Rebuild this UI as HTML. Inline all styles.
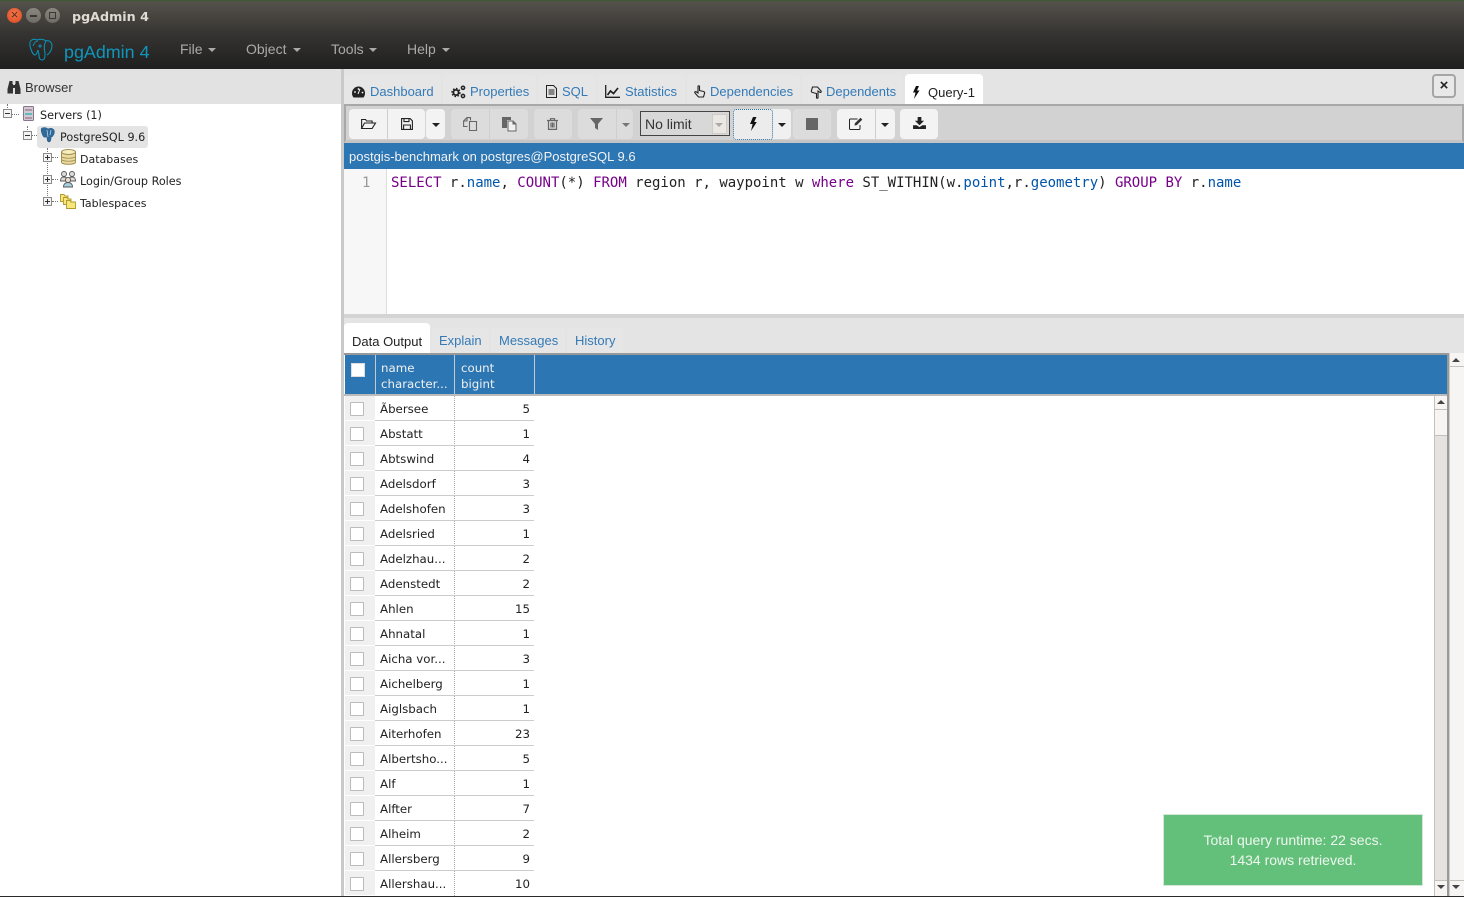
<!DOCTYPE html>
<html><head><meta charset="utf-8"><style>
*{box-sizing:border-box}
html,body{margin:0;padding:0;width:1464px;height:897px;overflow:hidden;background:#fff;font-family:"Liberation Sans",sans-serif}
.a{position:absolute}
svg{position:absolute;overflow:visible}
.t{position:absolute;white-space:nowrap;line-height:16px}
.tree{font:11.2px/14px "DejaVu Sans",sans-serif;color:#222;position:absolute;white-space:nowrap}
.tab{position:absolute;top:75px;height:29px;background:#e6e6e6;border-radius:4px 4px 0 0}
.lnk{position:absolute;top:84px;font-size:13px;line-height:16px;color:#337ab7;white-space:nowrap}
.btn{position:absolute;top:109px;height:30px;background:#f3f3f3;border-radius:4px}
.dis{background:#dcdcdc}
.sep{position:absolute;top:109px;height:30px;width:1px;background:#cfcfcf}
.r{position:absolute;left:345px;width:190px;height:25px;font:11.8px/26px "DejaVu Sans",sans-serif;color:#222}
.r i{position:absolute;left:5px;top:6px;width:14px;height:14px;background:#fff;border:1px solid #bbb;border-radius:1px}
.r b{position:absolute;left:0;top:0;width:30px;height:24px;background:#f0f0f0;font-weight:normal}
.r u{position:absolute;left:35px;top:0;text-decoration:none;white-space:nowrap}
.r s{position:absolute;right:5px;top:0;text-decoration:none}
.r em{position:absolute;left:30px;top:24px;width:159px;height:1px;background:#ccc}
.r q{position:absolute;left:109px;top:0;height:25px;width:0;border-left:1px dotted #aaa;quotes:none}
.r q:before,.r q:after{content:none}
.tg{position:absolute;width:9px;height:9px;border:1px solid #8a8a8a;background:#f4f4f4}
.tg:before{content:"";position:absolute;left:1px;top:3px;width:5px;height:1px;background:#333}
.tg.p:after{content:"";position:absolute;left:3px;top:1px;width:1px;height:5px;background:#333}
.dv{position:absolute;border-left:1px dotted #777}
.dh{position:absolute;border-top:1px dotted #777}
code{font:14px/18px "DejaVu Sans Mono",monospace;white-space:pre;color:#222;letter-spacing:-.012px}
code .k{color:#708}code .v{color:#05a}
</style></head><body>

<!-- window chrome -->
<div class="a" style="left:0;top:0;width:1464px;height:30px;background:linear-gradient(#56524c,#3a3835)"></div>
<div class="a" style="left:0;top:0;width:1464px;height:1px;background:#3c5a35"></div>
<div class="a" style="left:0;top:30px;width:1464px;height:39px;background:linear-gradient(#383634,#1f1f1f)"></div>
<div class="a" style="left:7px;top:8px;width:15px;height:15px;border-radius:50%;background:radial-gradient(circle at 50% 40%,#f47a50,#d9451c)"></div>
<div class="t" style="left:7px;top:7px;width:15px;text-align:center;font-size:13px;color:#5a2a18">×</div>
<div class="a" style="left:26px;top:8px;width:15px;height:15px;border-radius:50%;background:linear-gradient(#8a8780,#6e6b64)"></div>
<div class="a" style="left:30px;top:15px;width:7px;height:2px;background:#3a3835"></div>
<div class="a" style="left:45px;top:8px;width:15px;height:15px;border-radius:50%;background:linear-gradient(#8a8780,#6e6b64)"></div>
<div class="a" style="left:49px;top:12px;width:7px;height:7px;border:1px solid #3a3835"></div>
<div class="t" style="left:72px;top:8px;font:bold 12.7px/16px 'DejaVu Sans',sans-serif;color:#dfdbd2;padding-top:1px">pgAdmin 4</div>
<svg style="left:28px;top:38px" width="26" height="26" viewBox="0 0 26 26" fill="none" stroke="#0a8fb5" stroke-width="1.1"><path d="M9 2C4 0 1 3 2 8c1 4 3 9 5 9 2 0 2-3 3-5M9 2c3-1 7-1 9 1 3-1 6 1 6 5 0 4-3 8-5 9M18 3c-2 3-2 8-1 12 0 4 0 7-3 7-2 0-3-2-3-5 0-2-1-3-1-5"/><circle cx="12" cy="8" r="1" /><path d="M5 8c1-3 3-5 5-5"/></svg>
<div class="t" style="left:64px;top:41px;font-size:17.9px;line-height:22px;color:#0f96bb">pgAdmin 4</div>
<div class="t" style="left:180px;top:41px;font-size:14px;color:#aaa">File</div>
<div class="t" style="left:246px;top:41px;font-size:14px;color:#aaa">Object</div>
<div class="t" style="left:331px;top:41px;font-size:14px;color:#aaa">Tools</div>
<div class="t" style="left:407px;top:41px;font-size:14px;color:#aaa">Help</div>
<div class="a" style="left:208px;top:48px;border:4px solid transparent;border-top-color:#aaa;border-bottom:0"></div>
<div class="a" style="left:293px;top:48px;border:4px solid transparent;border-top-color:#aaa;border-bottom:0"></div>
<div class="a" style="left:369px;top:48px;border:4px solid transparent;border-top-color:#aaa;border-bottom:0"></div>
<div class="a" style="left:442px;top:48px;border:4px solid transparent;border-top-color:#aaa;border-bottom:0"></div>

<!-- left panel -->
<div class="a" style="left:0;top:69px;width:341px;height:35px;background:#e2e2e2"></div>
<div class="a" style="left:341px;top:69px;width:3px;height:828px;background:#c9c9c9"></div>
<svg style="left:7px;top:81px" width="14" height="14" viewBox="0 0 14 14" fill="#333"><path d="M2.500 0h3v3H6v4.500H6v5H.5V8zM8.500 0h3v0l2 8v5H8V7.500V3h.5z"/><rect x="6" y="4" width="2" height="3"/></svg>
<div class="t" style="left:25px;top:80px;font-size:13px;color:#333">Browser</div>

<div class="dv" style="left:7px;top:104px;height:10px"></div>
<div class="dh" style="left:12px;top:114px;width:7px"></div>
<div class="dv" style="left:27px;top:126px;height:8px"></div>
<div class="dh" style="left:32px;top:135px;width:5px"></div>
<div class="dv" style="left:47px;top:148px;height:58px"></div>
<div class="dh" style="left:52px;top:157px;width:6px"></div>
<div class="dh" style="left:52px;top:179px;width:6px"></div>
<div class="dh" style="left:52px;top:201px;width:6px"></div>
<div class="tg" style="left:3px;top:109px"></div>
<div class="tg" style="left:23px;top:131px"></div>
<div class="tg p" style="left:43px;top:153px"></div>
<div class="tg p" style="left:43px;top:175px"></div>
<div class="tg p" style="left:43px;top:197px"></div>

<svg style="left:23px;top:106px" width="11" height="15" viewBox="0 0 11 15"><rect x=".5" y=".5" width="10" height="14" rx="1" fill="#d6c8d2" stroke="#86768a"/><rect x="2" y="3" width="7" height="2" fill="#a898a8"/><rect x="2" y="7" width="7" height="2" fill="#5fbcbc"/><rect x="2" y="11" width="7" height="2" fill="#a898a8"/></svg>
<div class="tree" style="left:40px;top:109px">Servers (1)</div>
<div class="a" style="left:37px;top:126px;width:111px;height:22px;background:#e4e4e4;border-radius:3px"></div>
<svg style="left:40px;top:127px" width="16" height="16" viewBox="0 0 16 16"><path d="M2 1c3-1 5 0 6 1 2-1 5-1 6 1 1 2 0 5-2 7l-1 0c0 2 0 5-2 5-2 0-2-3-2-5C5 10 4 11 3 9 2 7 0 2 2 1z" fill="#2f6a9a" stroke="#1e4f78" stroke-width=".5"/><path d="M7 3l1 7M11 3l-1 5" stroke="#cfe0ee" stroke-width=".7" fill="none"/></svg>
<div class="tree" style="left:60px;top:131px">PostgreSQL 9.6</div>
<svg style="left:61px;top:149px" width="15" height="16" viewBox="0 0 15 16"><path d="M.5 3v10c0 3 14 3 14 0V3z" fill="#ecdca0" stroke="#a08f50"/><ellipse cx="7.500" cy="3" rx="7" ry="2.500" fill="#f6eebf" stroke="#a08f50"/><path d="M.5 7c0 3 14 3 14 0M.5 10c0 3 14 3 14 0" fill="none" stroke="#a08f50" stroke-width=".8"/></svg>
<div class="tree" style="left:80px;top:153px;font-size:11px">Databases</div>
<svg style="left:60px;top:171px" width="16" height="16" viewBox="0 0 16 16"><g fill="#dcdcdc" stroke="#555" stroke-width=".9"><circle cx="4" cy="3" r="2.500"/><circle cx="12" cy="3" r="2.500"/><path d="M.5 10c0-3 1-4 3.500-4s3.500 1 3.500 4zM8.500 10c0-3 1-4 3.500-4s3.500 1 3.500 4z"/></g><circle cx="8" cy="9" r="2.600" fill="#ecdccc" stroke="#555" stroke-width=".9"/><path d="M3.500 16c0-3 2-4.500 4.500-4.500s4.500 1.500 4.500 4.500z" fill="#a8cfe0" stroke="#555" stroke-width=".9"/></svg>
<div class="tree" style="left:80px;top:175px">Login/Group Roles</div>
<svg style="left:60px;top:194px" width="16" height="15" viewBox="0 0 16 15"><g fill="#f6e67c" stroke="#b09a2a" stroke-width=".9"><path d="M.5.500h3.500l1 1.500h3v5.500H.5z"/><path d="M3.500 3.500h3.500l1 1.500h3v5.500h-7.500z"/><path d="M6.500 6.500h3.500l1 1.500h4.500v6.500h-9z"/></g></svg>
<div class="tree" style="left:80px;top:197px;font-size:11px">Tablespaces</div>

<!-- top tabs -->
<div class="a" style="left:344px;top:69px;width:1120px;height:35px;background:#e4e4e4"></div>
<div class="tab" style="left:344px;width:97px"></div>
<div class="tab" style="left:443px;width:93px"></div>
<div class="tab" style="left:538px;width:58px"></div>
<div class="tab" style="left:598px;width:87px"></div>
<div class="tab" style="left:687px;width:113px"></div>
<div class="tab" style="left:802px;width:101px"></div>
<div class="a" style="left:905px;top:74px;width:78px;height:30px;background:#fff;border-radius:4px 4px 0 0"></div>

<svg style="left:352px;top:86px" width="13" height="12" viewBox="0 0 13 12"><path d="M6.500 0.500C3 .5 0 3.500 0 7c0 2 .6 3.500 1.500 4.500h10c.9-1 1.500-2.500 1.500-4.500C13 3.500 10 .5 6.500.5z" fill="#222"/><path d="M6 8l2-5" stroke="#fff" stroke-width="1"/><circle cx="3" cy="6" r=".9" fill="#fff"/><circle cx="6.500" cy="3" r=".9" fill="#fff"/><circle cx="10.500" cy="6.500" r=".9" fill="#fff"/></svg>
<div class="lnk" style="left:370px">Dashboard</div>
<svg style="left:451px;top:85px" width="15" height="14" viewBox="0 0 15 14" fill="none" stroke="#222"><circle cx="5" cy="7.500" r="2.600" stroke-width="1.800"/><circle cx="5" cy="7.500" r="4" stroke-width="1.400" stroke-dasharray="1.600 1.500"/><circle cx="12" cy="2.800" r="1.600" stroke-width="1.500"/><circle cx="12" cy="11" r="1.600" stroke-width="1.500"/></svg>
<div class="lnk" style="left:470px">Properties</div>
<svg style="left:546px;top:85px" width="11" height="13" viewBox="0 0 11 13" fill="none" stroke="#222"><path d="M.5.500h7l3 3v9h-10z"/><path d="M2.500 5h6M2.500 7h6M2.500 9h6" stroke-width=".9"/></svg>
<div class="lnk" style="left:562px">SQL</div>
<svg style="left:605px;top:85px" width="15" height="13" viewBox="0 0 15 13" fill="none" stroke="#222"><path d="M.7 0v12.300H15" stroke-width="1.300"/><path d="M2.500 10l3-4 3 2.500L13 3" stroke-width="1.700"/></svg>
<div class="lnk" style="left:625px">Statistics</div>
<svg style="left:694px;top:85px" width="12" height="14" viewBox="0 0 12 14" fill="none" stroke="#222" stroke-width="1.100"><path d="M4 1.500c0-1 1.500-1 1.500 0v4l4 1c1 .3 1.500 1 1 2l-1 3.500h-5L1 8c-.7-1 .5-2 1.500-1L4 8z"/></svg>
<div class="lnk" style="left:710px">Dependencies</div>
<svg style="left:810px;top:85px" width="12" height="14" viewBox="0 0 12 14" fill="none" stroke="#222" stroke-width="1.100"><path d="M8 12.500c0 1-1.500 1-1.500 0v-4l-4-1c-1-.3-1.500-1-1-2l1-3.500h5L11 6c.7 1-.5 2-1.500 1L8 6z"/></svg>
<div class="lnk" style="left:826px">Dependents</div>
<svg style="left:912px;top:86px" width="8" height="13" viewBox="0 0 8 13" fill="#111"><path d="M4 0h3L5 4.500h2.500L2 13l1.500-6.500H1z"/></svg>
<div class="t" style="left:928px;top:85px;font-size:13px;color:#222">Query-1</div>
<div class="a" style="left:1432px;top:74px;width:24px;height:24px;border:2px solid #a5a5a5;border-radius:4px;background:#e8e8e8"></div>
<div class="t" style="left:1432px;top:78px;width:24px;text-align:center;font-size:15px;font-weight:bold;color:#222">×</div>

<!-- toolbar -->
<div class="a" style="left:344px;top:104px;width:1120px;height:39px;background:#d2d2d2;border:2px solid #a8a8a8;border-bottom:3px solid #c4c4c4"></div>
<div class="btn" style="left:349px;width:76px"></div><div class="sep" style="left:387px"></div>
<div class="btn" style="left:426px;width:19px"></div><div class="sep" style="left:425px;background:#d5d5d5"></div>
<div class="btn dis" style="left:451px;width:77px"></div><div class="sep" style="left:489px"></div>
<div class="btn dis" style="left:534px;width:38px"></div>
<div class="btn dis" style="left:578px;width:55px"></div><div class="sep" style="left:616px"></div>
<div class="btn" style="left:736px;width:55px;background:#f0f0f0"></div>
<div class="a" style="left:733px;top:109px;width:40px;height:31px;border:1px dotted #2a6fa8;border-radius:3px;background:#ececec"></div>
<div class="btn dis" style="left:793px;width:38px"></div>
<div class="btn" style="left:837px;width:58px"></div><div class="sep" style="left:875px"></div>
<div class="btn" style="left:900px;width:38px"></div>

<svg style="left:361px;top:118px" width="15" height="12" viewBox="0 0 15 12" fill="none" stroke="#222" stroke-width="1.100"><path d="M.6 10.500V1.500h4l1 1.500h5.500v2M.6 10.500h10.500L14.500 5H3.500z"/></svg>
<svg style="left:401px;top:118px" width="12" height="12" viewBox="0 0 12 12" fill="none" stroke="#222" stroke-width="1.100"><path d="M.6.600h8.500l2.300 2.300v8.500H.6z"/><path d="M3 .6v3h5V.6"/><path d="M2.600 11.400V7h6.800v4.400"/></svg>
<div class="a" style="left:432px;top:123px;border:4px solid transparent;border-top-color:#222;border-bottom:0"></div>
<svg style="left:463px;top:117px" width="14" height="14" viewBox="0 0 14 14" fill="none" stroke="#666" stroke-width="1.100"><path d="M4.500 9.500H.6V4L4 .6h3.500V3.500"/><path d="M6.500 4.500h7v9h-7zM.6 4h3.400V.6"/></svg>
<svg style="left:502px;top:117px" width="14" height="14" viewBox="0 0 14 14"><path d="M0 0h9v3H5v8H0z" fill="#666"/><path d="M6 4h5l3 3v7H6z" fill="#f0f0f0" stroke="#666"/><path d="M10.500 4v3.500H14" fill="#666"/></svg>
<svg style="left:547px;top:118px" width="11" height="12" viewBox="0 0 11 12" fill="none" stroke="#666" stroke-width="1.200"><path d="M0 2.500h11M3.500 2.500V.7h4v1.800"/><path d="M1.500 2.500V11.400h8V2.500M4 4.500v5M5.500 4.500v5M7 4.500v5"/></svg>
<svg style="left:590px;top:118px" width="13" height="12" viewBox="0 0 13 12" fill="#666"><path d="M0 0h13L8 6v6L5 10V6z"/></svg>
<div class="a" style="left:622px;top:123px;border:4px solid transparent;border-top-color:#777;border-bottom:0"></div>

<div class="a" style="left:640px;top:111px;width:90px;height:25px;border:1.500px solid #444;background:#d8d8d8"></div>
<div class="t" style="left:645px;top:116px;font-size:14px;color:#333">No limit</div>
<div class="a" style="left:712px;top:114px;width:15px;height:20px;background:#ebe8e3;border:1px solid #cfccc6"></div>
<div class="a" style="left:715px;top:123px;border:4px solid transparent;border-top-color:#aaa;border-bottom:0"></div>

<svg style="left:749px;top:117px" width="8" height="14" viewBox="0 0 8 14" fill="#111"><path d="M4 0h3.500L5.200 5h2.600L2 14l1.600-7H1z"/></svg>
<div class="a" style="left:778px;top:123px;border:4px solid transparent;border-top-color:#222;border-bottom:0"></div>
<div class="a" style="left:806px;top:118px;width:12px;height:12px;background:#666"></div>
<svg style="left:849px;top:117px" width="14" height="13" viewBox="0 0 14 13" fill="none" stroke="#222" stroke-width="1"><path d="M8.500 2H1.500c-.6 0-1 .4-1 1v8.500c0 .6.400 1 1 1h8.500c.6 0 1-.4 1-1V8"/><path d="M5.500 8.500l.4-2.200L11.500.8l1.800 1.800-5.500 5.500z" fill="#333" stroke="none"/></svg>
<div class="a" style="left:881px;top:123px;border:4px solid transparent;border-top-color:#222;border-bottom:0"></div>
<svg style="left:913px;top:117px" width="13" height="12" viewBox="0 0 14 13" fill="#222"><path d="M5 0h4v4h3L7 9 2 4h3zM0 9h4l3 2 3-2h4v4H0z"/></svg>

<!-- title bar -->
<div class="a" style="left:344px;top:143px;width:1120px;height:26px;background:#2c76b4"></div>
<div class="t" style="left:349px;top:149px;font-size:13px;color:#f2f2f2">postgis-benchmark on postgres@PostgreSQL 9.6</div>

<!-- editor -->
<div class="a" style="left:344px;top:169px;width:43px;height:145px;background:#f7f7f7;border-right:1px solid #ddd"></div>
<code class="a" style="left:362px;top:174px;color:#999">1</code>
<code class="a" style="left:391px;top:174px"><span class="k">SELECT</span> r.<span class="v">name</span>, <span class="k">COUNT</span>(*) <span class="k">FROM</span> region r, waypoint w <span class="k">where</span> ST_WITHIN(w.<span class="v">point</span>,r.<span class="v">geometry</span>) <span class="k">GROUP</span> <span class="k">BY</span> r.<span class="v">name</span></code>
<div class="a" style="left:344px;top:314px;width:1120px;height:4px;background:#d4d4d4"></div>

<!-- result tabs -->
<div class="a" style="left:344px;top:318px;width:1120px;height:35px;background:#e4e4e4"></div>
<div class="a" style="left:344px;top:323px;width:86px;height:30px;background:#fff;border-radius:4px 4px 0 0"></div>
<div class="tab" style="left:431px;top:328px;height:25px;width:58px"></div>
<div class="tab" style="left:491px;top:328px;height:25px;width:74px"></div>
<div class="tab" style="left:567px;top:328px;height:25px;width:56px"></div>
<div class="t" style="left:352px;top:334px;font-size:13px;color:#222">Data Output</div>
<div class="lnk" style="left:439px;top:333px">Explain</div>
<div class="lnk" style="left:499px;top:333px">Messages</div>
<div class="lnk" style="left:575px;top:333px">History</div>

<!-- grid header -->
<div class="a" style="left:344px;top:353px;width:1120px;height:43px;background:#fff"></div>
<div class="a" style="left:344px;top:353px;width:1105px;height:2px;background:#999"></div>
<div class="a" style="left:345px;top:355px;width:1102px;height:39px;background:#2c76b4"></div>
<div class="a" style="left:344px;top:394px;width:1105px;height:2px;background:#bbb"></div>
<div class="a" style="left:1447px;top:353px;width:2px;height:544px;background:#999"></div>
<div class="a" style="left:375px;top:355px;width:1px;height:39px;background:#c8c8c8"></div>
<div class="a" style="left:454px;top:355px;width:1px;height:39px;background:#c8c8c8"></div>
<div class="a" style="left:534px;top:355px;width:1px;height:39px;background:#c8c8c8"></div>
<div class="a" style="left:351px;top:363px;width:14px;height:14px;background:#fff;border:1px solid #ddd"></div>
<div class="t" style="left:381px;top:360px;font:11.8px/16px 'DejaVu Sans',sans-serif;color:#f0f0f0">name<br>character...</div>
<div class="t" style="left:461px;top:360px;font:11.8px/16px 'DejaVu Sans',sans-serif;color:#f0f0f0">count<br>bigint</div>

<!-- rows -->
<div class="r" style="top:396px"><b></b><i></i><u>Ãbersee</u><q></q><s>5</s><em></em></div>
<div class="r" style="top:421px"><b></b><i></i><u>Abstatt</u><q></q><s>1</s><em></em></div>
<div class="r" style="top:446px"><b></b><i></i><u>Abtswind</u><q></q><s>4</s><em></em></div>
<div class="r" style="top:471px"><b></b><i></i><u>Adelsdorf</u><q></q><s>3</s><em></em></div>
<div class="r" style="top:496px"><b></b><i></i><u>Adelshofen</u><q></q><s>3</s><em></em></div>
<div class="r" style="top:521px"><b></b><i></i><u>Adelsried</u><q></q><s>1</s><em></em></div>
<div class="r" style="top:546px"><b></b><i></i><u>Adelzhau...</u><q></q><s>2</s><em></em></div>
<div class="r" style="top:571px"><b></b><i></i><u>Adenstedt</u><q></q><s>2</s><em></em></div>
<div class="r" style="top:596px"><b></b><i></i><u>Ahlen</u><q></q><s>15</s><em></em></div>
<div class="r" style="top:621px"><b></b><i></i><u>Ahnatal</u><q></q><s>1</s><em></em></div>
<div class="r" style="top:646px"><b></b><i></i><u>Aicha vor...</u><q></q><s>3</s><em></em></div>
<div class="r" style="top:671px"><b></b><i></i><u>Aichelberg</u><q></q><s>1</s><em></em></div>
<div class="r" style="top:696px"><b></b><i></i><u>Aiglsbach</u><q></q><s>1</s><em></em></div>
<div class="r" style="top:721px"><b></b><i></i><u>Aiterhofen</u><q></q><s>23</s><em></em></div>
<div class="r" style="top:746px"><b></b><i></i><u>Albertsho...</u><q></q><s>5</s><em></em></div>
<div class="r" style="top:771px"><b></b><i></i><u>Alf</u><q></q><s>1</s><em></em></div>
<div class="r" style="top:796px"><b></b><i></i><u>Alfter</u><q></q><s>7</s><em></em></div>
<div class="r" style="top:821px"><b></b><i></i><u>Alheim</u><q></q><s>2</s><em></em></div>
<div class="r" style="top:846px"><b></b><i></i><u>Allersberg</u><q></q><s>9</s><em></em></div>
<div class="r" style="top:871px"><b></b><i></i><u>Allershau...</u><q></q><s>10</s></div>

<!-- inner scrollbar -->
<div class="a" style="left:1434px;top:396px;width:14px;height:501px;background:#e5e2df;border-left:1px solid #c4c1bd"></div>
<div class="a" style="left:1434px;top:396px;width:14px;height:40px;background:#f6f5f3;border-left:1px solid #c4c1bd;border-bottom:1px solid #c4c1bd"></div>
<div class="a" style="left:1435px;top:409px;width:13px;height:1px;background:#c4c1bd"></div>
<div class="a" style="left:1437px;top:400px;border:4px solid transparent;border-bottom-color:#444;border-top:0"></div>
<div class="a" style="left:1435px;top:880px;width:13px;height:17px;background:#f6f5f3;border-top:1px solid #c4c1bd"></div>
<div class="a" style="left:1437px;top:885px;border:4px solid transparent;border-top-color:#444;border-bottom:0"></div>
<div class="a" style="left:1447px;top:396px;width:2px;height:501px;background:#999"></div>
<!-- outer scrollbar -->
<div class="a" style="left:1449px;top:353px;width:15px;height:544px;background:#f6f5f3;border-left:1px solid #d0cdc9"></div>
<div class="a" style="left:1450px;top:366px;width:14px;height:1px;background:#c4c1bd"></div>
<div class="a" style="left:1452px;top:358px;border:4px solid transparent;border-bottom-color:#444;border-top:0"></div>
<div class="a" style="left:1450px;top:880px;width:14px;height:1px;background:#c4c1bd"></div>
<div class="a" style="left:1452px;top:885px;border:4px solid transparent;border-top-color:#444;border-bottom:0"></div>

<!-- toast -->
<div class="a" style="left:1163px;top:814px;width:260px;height:72px;background:#63c07a;border:1px solid #d5e8d8"></div>
<div class="t" style="left:1163px;top:830px;width:260px;text-align:center;font-size:14px;line-height:20px;color:#eef7ef">Total query runtime: 22 secs.<br>1434 rows retrieved.</div>

<div class="a" style="left:0;top:896px;width:1464px;height:1px;background:#2a2a2a"></div>
</body></html>
